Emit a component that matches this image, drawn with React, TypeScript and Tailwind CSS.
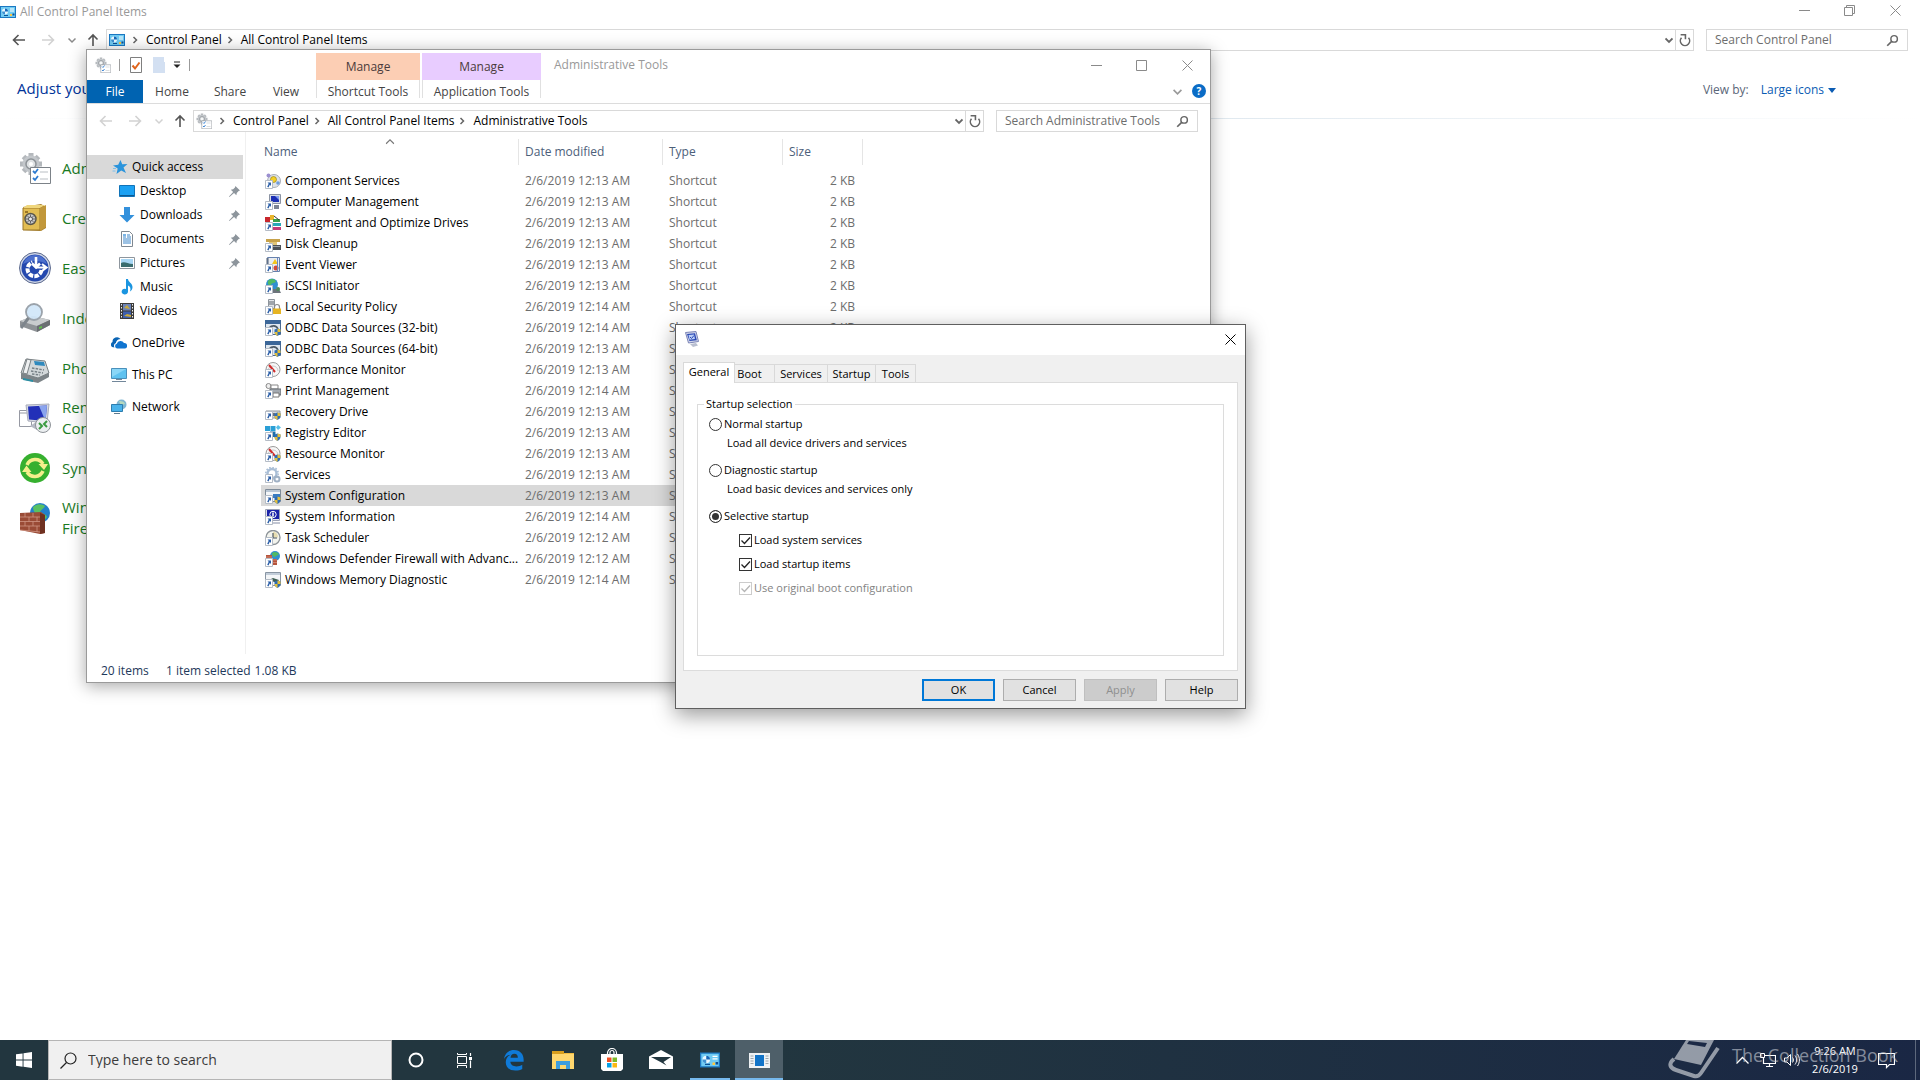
import { useState, type ReactNode } from "react";

interface AdminTool {
  name: string;
  date: string;
  icon: string;
}

const tools: AdminTool[] = [
  { name: "Component Services", date: "2/6/2019 12:13 AM", icon: "component" },
  { name: "Computer Management", date: "2/6/2019 12:13 AM", icon: "computer" },
  { name: "Defragment and Optimize Drives", date: "2/6/2019 12:13 AM", icon: "defrag" },
  { name: "Disk Cleanup", date: "2/6/2019 12:13 AM", icon: "cleanup" },
  { name: "Event Viewer", date: "2/6/2019 12:13 AM", icon: "event" },
  { name: "iSCSI Initiator", date: "2/6/2019 12:13 AM", icon: "iscsi" },
  { name: "Local Security Policy", date: "2/6/2019 12:14 AM", icon: "policy" },
  { name: "ODBC Data Sources (32-bit)", date: "2/6/2019 12:14 AM", icon: "odbc" },
  { name: "ODBC Data Sources (64-bit)", date: "2/6/2019 12:13 AM", icon: "odbc" },
  { name: "Performance Monitor", date: "2/6/2019 12:13 AM", icon: "perf" },
  { name: "Print Management", date: "2/6/2019 12:14 AM", icon: "print" },
  { name: "Recovery Drive", date: "2/6/2019 12:13 AM", icon: "recovery" },
  { name: "Registry Editor", date: "2/6/2019 12:13 AM", icon: "registry" },
  { name: "Resource Monitor", date: "2/6/2019 12:13 AM", icon: "resource" },
  { name: "Services", date: "2/6/2019 12:13 AM", icon: "services" },
  { name: "System Configuration", date: "2/6/2019 12:13 AM", icon: "config" },
  { name: "System Information", date: "2/6/2019 12:14 AM", icon: "info" },
  { name: "Task Scheduler", date: "2/6/2019 12:12 AM", icon: "task" },
  { name: "Windows Defender Firewall with Advanc...", date: "2/6/2019 12:12 AM", icon: "firewall" },
  { name: "Windows Memory Diagnostic", date: "2/6/2019 12:14 AM", icon: "memory" },
];

const quickLinks = [
  { name: "Desktop", pinned: true },
  { name: "Downloads", pinned: true },
  { name: "Documents", pinned: true },
  { name: "Pictures", pinned: true },
  { name: "Music", pinned: false },
  { name: "Videos", pinned: false },
];

const panelItems = [
  "Administrative Tools",
  "Credential Manager",
  "Ease of Access Center",
  "Indexing Options",
  "Phone and Modem",
  "RemoteApp and Desktop Connections",
  "Sync Center",
  "Windows Defender Firewall",
];

const dialogTabs = [
  { name: "General", width: "w-[52px]" },
  { name: "Boot", width: "w-[40px]" },
  { name: "Services", width: "w-[53px]" },
  { name: "Startup", width: "w-[48px]" },
  { name: "Tools", width: "w-[40px]" },
];

function Svg({ size = 16, box = 16, children }: { size?: number; box?: number; children: ReactNode }) {
  return (
    <svg width={size} height={size} viewBox={`0 0 ${box} ${box}`} fill="none" className="shrink-0" aria-hidden="true">
      {children}
    </svg>
  );
}

/* ---------- small line glyphs ---------- */

function ArrowGlyph({ dir, color }: { dir: "left" | "right" | "up"; color: string }) {
  const paths = {
    left: "M14 8H2.5M7.5 3l-5 5 5 5",
    right: "M2 8h11.500M8.500 3l5 5-5 5",
    up: "M8 14V3M3.500 7.500L8 3l4.500 4.500",
  };
  return (
    <Svg>
      <path d={paths[dir]} stroke={color} strokeWidth="1.6" />
    </Svg>
  );
}

function Chevron({ dir = "down", color = "#666", size = 8, thick = 1.5 }: { dir?: "down" | "right" | "up"; color?: string; size?: number; thick?: number }) {
  const paths = { down: "M.5 2.500L4 6l3.500-3.500", right: "M2.500 1L5.500 4l-3 3", up: "M.5 6L4 2.500 7.500 6" };
  return (
    <Svg size={size} box={8}>
      <path d={paths[dir]} stroke={color} strokeWidth={thick} />
    </Svg>
  );
}

function Refresh() {
  return (
    <Svg size={14}>
      <path d="M4 5.500A5.300 5.300 0 1 0 12 5.500" stroke="#666" strokeWidth="1.800" />
      <path d="M3 2h5.500v5" stroke="#666" strokeWidth="1.800" />
    </Svg>
  );
}

function Magnifier() {
  return (
    <Svg size={13}>
      <circle cx="10" cy="6" r="4" stroke="#666" strokeWidth="1.800" />
      <path d="M7 9l-5.500 5.500" stroke="#666" strokeWidth="2" />
    </Svg>
  );
}

function CaptionGlyph({ kind, color }: { kind: "min" | "max" | "restore" | "close"; color: string }) {
  return (
    <Svg size={11} box={11}>
      {kind === "min" && <path d="M0 5.500h11" stroke={color} />}
      {kind === "max" && <path d="M.5.5h10v10H.5z" stroke={color} />}
      {kind === "restore" && <path d="M.5 2.500h8v8h-8zM2.500 2.500v-2h8v8h-2" stroke={color} />}
      {kind === "close" && <path d="M.5.5l10 10M10.500.5l-10 10" stroke={color} />}
    </Svg>
  );
}

/* ---------- 16px icons ---------- */

function ControlPanelIcon({ size = 16 }: { size?: number }) {
  return (
    <Svg size={size}>
      <path d="M0 2h16v12H0z" fill="#1b78c2" />
      <path d="M1 3h14v10H1z" fill="#6fcbf3" />
      <circle cx="5" cy="7.500" r="3" fill="#e9f7ff" />
      <path d="M5 7.500v-3a3 3 0 0 1 3 3z" fill="#1467b8" />
      <path d="M5 7.500H2a3 3 0 0 0 3 3z" fill="#3f92d2" />
      <path d="M10 5h4M10 7h4" stroke="#fff" />
      <path d="M10 10h2v2h-2z" fill="#ffc83d" />
      <path d="M12.500 9.500h2v2h-2zM4 11h4v1H4z" fill="#0d4f93" />
    </Svg>
  );
}

function AdminToolsIcon({ size = 16 }: { size?: number }) {
  return (
    <Svg size={size} box={32}>
      <g stroke="#b4b8bc" strokeWidth="5">
        <path d="M12 1v22M1 12h22M4.500 4.500l15 15M19.500 4.500l-15 15" />
      </g>
      <circle cx="12" cy="12" r="8.500" fill="#c3c7cb" />
      <circle cx="12" cy="12" r="5" fill="#dfe2e4" stroke="#8d9297" strokeWidth="1.500" />
      <circle cx="12" cy="12" r="2" fill="#fff" />
      <path d="M11.500 15.500h20v16h-20z" fill="#fff" stroke="#7c8288" />
      <path d="M14 19l2 2 3-4M14 26l2 2 3-4" stroke="#2e7cd1" strokeWidth="1.800" />
      <path d="M21 20h8M21 27h8" stroke="#b9bec3" />
    </Svg>
  );
}

function Shield() {
  return (
    <>
      <path d="M12.500 8.500l3 1v2.500c0 2-1.500 3-3 4-1.500-1-3-2-3-4V9.500z" fill="#2f6db5" />
      <path d="M12.500 8.500l3 1V12h-3zM9.500 12h3v4c-1.500-1-3-2-3-4z" fill="#e3bf3a" />
    </>
  );
}

function toolArt(kind: string): ReactNode {
  switch (kind) {
    case "component":
      return (
        <>
          <circle cx="9" cy="8" r="6.500" fill="#dfe3e8" stroke="#a9afb8" />
          <circle cx="3.500" cy="2.500" r="2" fill="#9b8fd0" />
          <circle cx="8.500" cy="6.500" r="3" fill="#f4cf27" stroke="#8a7a12" strokeWidth=".6" />
          <circle cx="13" cy="10" r="1.800" fill="#6f9cdc" />
        </>
      );
    case "computer":
      return (
        <>
          <path d="M4.500.5h11v9h-11z" fill="#d9dde6" stroke="#8b93a3" />
          <path d="M6 2h8v6H6z" fill="#1c2fb4" />
          <path d="M10 2h4v4z" fill="#7f9cf0" />
          <path d="M9 11h5v4H9z" fill="#7c8494" />
        </>
      );
    case "defrag":
      return (
        <>
          <path d="M0 2h5v5H0z" fill="#c8262c" />
          <path d="M5 0h4v5H5z" fill="#e8b52b" />
          <path d="M8 4h7v3H8z" fill="#3ba24b" />
          <path d="M9 1l5 4" stroke="#333" />
          <path d="M8 8h8v3H8z" fill="#27a8b8" />
          <path d="M8 12h8v3H8z" fill="#c23a78" />
        </>
      );
    case "cleanup":
      return (
        <>
          <path d="M1 3h14v3H1z" fill="#c7a24a" />
          <path d="M4 6h8v3H4z" fill="#e2c678" />
          <path d="M7 9h9v5H7z" fill="#4b5157" />
          <path d="M8 10h7v1H8z" fill="#9ba1a7" />
        </>
      );
    case "event":
      return (
        <>
          <path d="M2.500.5h12v14h-12z" fill="#e8edf5" stroke="#6681ad" />
          <path d="M1 2h3M1 4h3M1 6h3" stroke="#56606e" />
          <path d="M10 2l3 5H7z" fill="#f3c51d" />
          <circle cx="11" cy="11" r="2.500" fill="#d24a3a" />
          <path d="M12.500 1v13" stroke="#6d87bd" />
        </>
      );
    case "iscsi":
      return (
        <>
          <circle cx="7" cy="6.500" r="6" fill="#2f8ed0" />
          <path d="M3 3c3-3 6-2 8 0-1 3-4 1-5 4-2 1-4-1-3-4z" fill="#4fb963" />
          <path d="M8 11h6l2 4H8z" fill="#6d747c" />
          <circle cx="13" cy="11" r="2" fill="#4c8b58" />
        </>
      );
    case "policy":
      return (
        <>
          <path d="M3.500.5h6v9h-6z" fill="#e3e6ea" stroke="#8d949c" />
          <path d="M4 3h5M4 5h5" stroke="#5d646c" />
          <path d="M9.500 10V8a2.500 2.500 0 0 1 5 0v2" stroke="#8a8a8a" strokeWidth="1.200" />
          <path d="M8 9.500h8V15H8z" fill="#e6b422" />
        </>
      );
    case "odbc":
      return (
        <>
          <path d="M.5.5h15v14H.5z" fill="#dfe8f1" stroke="#4c6a8f" />
          <path d="M0 0h16v4H0z" fill="#3c6799" />
          <path d="M4 8c3-3 7-3 9 1" stroke="#4d5a66" strokeWidth="1.600" />
          <Shield />
        </>
      );
    case "perf":
    case "resource":
      return (
        <>
          <circle cx="8" cy="7.500" r="7" fill="#f7f7f7" stroke="#9a9a9a" />
          <path d="M3 9a5 5 0 0 1 10 0" stroke="#c9c9c9" />
          <path d="M4 3l6 7" stroke="#cf2b2b" strokeWidth="2" />
          {kind === "resource" && <Shield />}
        </>
      );
    case "print":
      return (
        <>
          <circle cx="3.500" cy="3" r="2.500" fill="#eee" stroke="#888" />
          <path d="M6 2h7v4H6z" fill="#fff" stroke="#888" />
          <path d="M5 6h11v6H5z" fill="#a4aab1" stroke="#666c73" />
          <path d="M8 10h6v4H8z" fill="#fff" stroke="#777" />
        </>
      );
    case "recovery":
      return (
        <>
          <path d="M1 7h14v7H1z" fill="#d5d9dd" stroke="#8f959b" />
          <path d="M6 9h4v3H6z" fill="#6d7379" />
          <Shield />
        </>
      );
    case "registry":
      return (
        <>
          <path d="M0 1h5v5H0zM5.500 1h5v5h-5z" fill="#2a9fd6" />
          <path d="M5 6.500h5.500V12H5z" fill="#1b6fa8" />
          <path d="M13 0l3 2.500-3 2.500-2-2.500z" fill="#55bfe8" />
          <Shield />
        </>
      );
    case "services":
      return (
        <>
          <circle cx="7" cy="6.500" r="4.500" stroke="#a9bed6" strokeWidth="2.400" />
          <circle cx="7" cy="6.500" r="6.200" stroke="#a9bed6" strokeWidth="1.600" strokeDasharray="1.600 1.600" />
          <circle cx="12" cy="12" r="2.500" stroke="#9fb0c4" strokeWidth="2" />
        </>
      );
    case "config":
      return (
        <>
          <path d="M.5 1.500h15v12H.5z" fill="#f4f6f8" stroke="#7e8b99" />
          <path d="M1 2h14v2H1z" fill="#b9c6d4" />
          <path d="M8 6h7v4H8z" fill="#3a7cc2" />
          <Shield />
        </>
      );
    case "info":
      return (
        <>
          <path d="M.5.5h14v11H.5z" fill="#dfe1ea" stroke="#9aa0b4" />
          <path d="M2 1h12v9H2z" fill="#1a22a8" />
          <circle cx="8" cy="5.500" r="3.200" stroke="#fff" />
          <path d="M8 3.500v4" stroke="#fff" strokeWidth="1.500" />
          <path d="M8 13h7v2H8z" fill="#c2c6d2" />
        </>
      );
    case "task":
      return (
        <>
          <circle cx="8" cy="7.500" r="7" fill="#f3f4ee" stroke="#8e9499" strokeWidth="1.400" />
          <path d="M8 7.500V1.500a6 6 0 0 1 5 6z" fill="#e6ddb0" />
          <path d="M8 3v5h4" stroke="#4b5560" strokeWidth="1.200" />
        </>
      );
    case "firewall":
      return (
        <>
          <circle cx="10" cy="5" r="5" fill="#2f8ed0" />
          <path d="M7 2c3-2 5-1 7 1-1 2-3 1-4 3-2 0-3-2-3-4z" fill="#4fb963" />
          <path d="M1 4h6v4h5v6H1z" fill="#b5543c" />
          <path d="M1 6h6M7 9h5M7 11.500h5" stroke="#e0a392" strokeWidth=".6" />
        </>
      );
    default:
      return (
        <>
          <path d="M.5.5h15v13H.5z" fill="#f4f6f8" stroke="#8995a3" />
          <path d="M1 1h14v2H1z" fill="#c2cdd9" />
          <path d="M4 8l4-2 6 2-2 3z" fill="#3f5f52" />
          <Shield />
        </>
      );
  }
}

function ToolIcon({ kind }: { kind: string }) {
  return (
    <Svg>
      {toolArt(kind)}
      {/* shortcut arrow badge */}
      <path d="M.5 7.500h7v8h-7z" fill="#fff" stroke="#b5bcc6" />
      <path d="M2.500 9.500H6V13l-1.200-1.200-1.300 2.700-1.300-.8 1.500-2.900z" fill="#2a5ea8" />
    </Svg>
  );
}

function NavIcon({ name }: { name: string }) {
  switch (name) {
    case "Quick access":
      return (
        <Svg>
          <path d="M8.500 1l1.700 4.300 5.300-.3-4 3.600 2.500 5.400-4.800-2.500-4.700 3.500 1.200-5.500L1 6.500l5.200-.8z" fill="#2a94dc" />
          <path d="M1 9.500h3M.5 12h3" stroke="#7dc0ec" />
        </Svg>
      );
    case "Desktop":
      return (
        <Svg>
          <path d="M.5 2.500h15v11H.5z" fill="#1ba1f3" stroke="#1173b8" />
          <path d="M1 12h14v1H1z" fill="#0c5a93" />
        </Svg>
      );
    case "Downloads":
      return (
        <Svg>
          <path d="M5 0h6v8h4.500L8 15.500.5 8H5z" fill="#3391dc" />
        </Svg>
      );
    case "Documents":
      return (
        <Svg>
          <path d="M2.500.5h8l3 3v12h-11z" fill="#fff" stroke="#7f8891" />
          <path d="M4 6h3M4 8h8M4 10h8M4 12h8M8 4h3M8 6h4" stroke="#3a85c9" />
          <path d="M4 3h3v2H4z" fill="#7ab5e6" />
        </Svg>
      );
    case "Pictures":
      return (
        <Svg>
          <path d="M.5 2.500h15v11H.5z" fill="#fff" stroke="#8e969e" />
          <path d="M2 4h12v8H2z" fill="#a7d6f4" />
          <path d="M2 8c4-2 6 1 12 1v3H2z" fill="#3a6d6f" />
        </Svg>
      );
    case "Music":
      return (
        <Svg>
          <path d="M7 0h2c0 3 4.500 4 4.500 8 0 2-1 3.500-2.500 4.500 1-3 .5-5-2-6V12.500A3.200 2.800 0 1 1 7 10z" fill="#1b95e0" />
        </Svg>
      );
    case "Videos":
      return (
        <Svg>
          <path d="M1 0h14v16H1z" fill="#3b3b3b" />
          <path d="M4 1h8v6.500H4z" fill="#6c84b8" />
          <path d="M4 8.500h8V15H4z" fill="#3d5fae" />
          <path d="M5 5l3-3 3 4zM5 13l3-2 4 1v2z" fill="#c9a93a" />
          <path d="M2.500 1v14M13.500 1v14" stroke="#eee" strokeDasharray="1.500 1.500" />
        </Svg>
      );
    case "OneDrive":
      return (
        <Svg>
          <path d="M1 12a3 3 0 0 1 .5-5A4.500 4.500 0 0 1 9.500 4C6 4 5 7 5 8c-2 .5-2.500 3-1.500 4.500z" fill="#0a64b4" />
          <path d="M6 13.500a2.500 2.500 0 0 1-.2-4.800A4 4 0 0 1 13 8a2.800 2.800 0 0 1 1 5.500z" fill="#1175d0" />
        </Svg>
      );
    case "This PC":
      return (
        <Svg>
          <path d="M.5 1.500h15v10H.5z" fill="#5fc2f0" stroke="#4a90bb" />
          <path d="M1 2h14L1 10z" fill="#8ad6f7" />
          <path d="M5 12.500h6M1 14.500h14" stroke="#72879a" />
        </Svg>
      );
    default:
      return (
        <Svg>
          <circle cx="10.500" cy="5.500" r="5" fill="#7fb6d3" />
          <path d="M8 2c2 0 5 0 6 3-2 1-3 0-4 2z" fill="#b5d8bd" />
          <path d="M.5 5.500h11v7H.5z" fill="#49b2ea" stroke="#2d7dae" />
          <path d="M3 14.500h6" stroke="#5d7b90" />
        </Svg>
      );
  }
}

function Pin() {
  return (
    <Svg size={11} box={12}>
      <path d="M7 0l5 5-1.500.5L8.500 7.500 8 10 5.500 7.500.5 12 0 11.500l4.500-5L2 4l2.500-.5 2-2z" fill="#8d959c" />
    </Svg>
  );
}

/* ---------- 32px control panel icons ---------- */

function PanelIcon({ name }: { name: string }) {
  switch (name) {
    case "Administrative Tools":
      return <AdminToolsIcon size={32} />;
    case "Credential Manager":
      return (
        <Svg size={32} box={32}>
          <path d="M4 5l18-3 5 3v21l-5 3-18-1z" fill="#a9822f" />
          <path d="M4 6h17v22H4z" fill="#e2bd52" stroke="#9b7626" />
          <path d="M4 6l4-3h18l-5 3z" fill="#efd67c" />
          <path d="M21 6l6-3v22l-6 4z" fill="#c1973a" />
          <circle cx="11.500" cy="17" r="5.500" fill="#c9cacb" stroke="#5b574a" strokeWidth="1.500" />
          <path d="M11.500 12.500v9M7 17h9M8.500 14l6 6M14.500 14l-6 6" stroke="#66676b" />
          <circle cx="11.500" cy="17" r="2" fill="#efefef" stroke="#55565a" />
          <path d="M6 9h3v2H6z" fill="#9b7626" />
        </Svg>
      );
    case "Ease of Access Center":
      return (
        <Svg size={32} box={32}>
          <circle cx="16" cy="16" r="15.500" fill="#cfd6e6" stroke="#5d6a8e" />
          <circle cx="16" cy="16" r="13.500" fill="#2448ae" />
          <path d="M4 12a12.500 12.500 0 0 1 24 0c-7-4-17-4-24 0z" fill="#4d70cd" />
          <path d="M22.500 18a7 7 0 1 1-9-7.500" stroke="#fff" strokeWidth="4" strokeDasharray="4.500 1.200" />
          <path d="M17 5v10M13 11.500l4 4 4-4" stroke="#fff" strokeWidth="2.600" />
          <path d="M17 15.500h9M23 12l4.500 3.500L23 19" stroke="#fff" strokeWidth="2.200" />
        </Svg>
      );
    case "Indexing Options":
      return (
        <Svg size={32} box={32}>
          <path d="M1 19l13-5 17 4v5l-13 7L1 24z" fill="#8e9296" />
          <path d="M1 19l13-5 17 4-13 6z" fill="#c9ccce" />
          <path d="M18 24l13-6v5l-13 7z" fill="#6b6f73" />
          <path d="M20 25l3-1v2l-3 1z" fill="#61c14a" />
          <circle cx="15" cy="10" r="8" fill="#cfe6f8" fillOpacity=".9" stroke="#9ba3ab" strokeWidth="1.800" />
          <path d="M9.500 16L2 26" stroke="#7e858c" strokeWidth="3" />
        </Svg>
      );
    case "Phone and Modem":
      return (
        <Svg size={32} box={32}>
          <path d="M2 21l16 4 12-5v5l-11 6L2 27z" fill="#7d8488" />
          <path d="M7 7l19 2 4 12-11 5-17-5z" fill="#d3d8da" stroke="#7b8285" />
          <path d="M15 9l10 1 1 4-10-1z" fill="#2f89bd" />
          <path d="M13 16l12 2M12 19l12 2M13 22l8 1" stroke="#788187" strokeWidth="1.500" strokeDasharray="2.500 1.200" />
          <path d="M4 21L8 7l4 1-4 14z" fill="#eef0f1" stroke="#7b8285" />
          <path d="M4 26l10 2v2L4 28z" fill="#2b8ea3" />
        </Svg>
      );
    case "RemoteApp and Desktop Connections":
      return (
        <Svg size={32} box={32}>
          <path d="M.5 8.500h12v16H.5z" fill="#fff" stroke="#9699a3" />
          <path d="M1 11h11" stroke="#9699a3" />
          <path d="M7 3l23-1-2 19-19-2z" fill="#d5d8e2" stroke="#a9adba" />
          <path d="M9 4.500l19-1-1.500 15.500L10 17.500z" fill="#2230b8" />
          <path d="M20 4l8-.5L26.500 19z" fill="#8aa4ee" />
          <path d="M11 24l6-4 5 5-4 3z" fill="#b5b9c4" />
          <circle cx="24" cy="23" r="7.500" fill="#eceff1" stroke="#8d9297" />
          <path d="M20 21l3 3-3 3M28 19l-3 3 3 3" stroke="#3b9b42" strokeWidth="2" />
        </Svg>
      );
    case "Sync Center":
      return (
        <Svg size={32} box={32}>
          <circle cx="16" cy="16" r="15" fill="#36b02f" />
          <path d="M8 13a9 9 0 0 1 16-1" stroke="#f4ef8c" strokeWidth="3.500" />
          <path d="M24 19a9 9 0 0 1-16 1" stroke="#f4ef8c" strokeWidth="3.500" />
          <path d="M19.500 12h9.500l-4 6zM3 20h9.500L7.500 13.500z" fill="#f4ef8c" />
        </Svg>
      );
    default:
      return (
        <Svg size={32} box={32}>
          <circle cx="21" cy="11" r="10" fill="#2380cb" />
          <path d="M14 5c4-4 9-3 12-1-1 3-4 3-5 6 3 2 6 2 7 5-3 5-8 4-9 1 0-4-5-5-5-11z" fill="#58c163" />
          <path d="M1 11l21-1 4 3v18l-5 1-20-4z" fill="#9a4b36" />
          <path d="M1 15h20M1 19.500h20M1 24h20M1 28l20 2" stroke="#cf9483" strokeWidth=".8" />
          <path d="M6 11v4M14 11v4M10 15v4.500M18 15v4.500M6 19.500V24M14 19.500V24M10 24v5M18 24v6" stroke="#cf9483" strokeWidth=".8" />
          <path d="M21 11l5 2v18l-5 1z" fill="#6f3121" />
        </Svg>
      );
  }
}

/* ---------- shared window parts ---------- */

function CaptionButtons({ middle }: { middle: "max" | "restore" }) {
  return (
    <div className="ml-auto flex h-full">
      <button type="button" aria-label="Minimize" className="flex w-[46px] items-center justify-center">
        <CaptionGlyph kind="min" color="#8a8a8a" />
      </button>
      <button type="button" aria-label="Maximize" className="flex w-[45px] items-center justify-center">
        <CaptionGlyph kind={middle} color="#8a8a8a" />
      </button>
      <button type="button" aria-label="Close" className="flex w-[46px] items-center justify-center">
        <CaptionGlyph kind="close" color="#8a8a8a" />
      </button>
    </div>
  );
}

interface AddressRowProps {
  icon: ReactNode;
  crumbs: string[];
  searchLabel: string;
  backColor: string;
  searchWidth: string;
}

function AddressRow({ icon, crumbs, searchLabel, backColor, searchWidth }: AddressRowProps) {
  return (
    <div className="flex h-[22px] items-center pr-3">
      <button type="button" aria-label="Back" className="ml-[11px]">
        <ArrowGlyph dir="left" color={backColor} />
      </button>
      <button type="button" aria-label="Forward" className="ml-[13px]">
        <ArrowGlyph dir="right" color="#d2d2d2" />
      </button>
      <button type="button" aria-label="Recent locations" className="ml-3">
        <Chevron color={backColor === "#555" ? "#8a8a8a" : "#d2d2d2"} />
      </button>
      <button type="button" aria-label="Up" className="ml-[9px]">
        <ArrowGlyph dir="up" color="#555" />
      </button>
      <div className="ml-[5px] flex h-full flex-1 items-center border border-[#d9d9d9] bg-white pl-0.5">
        <span className="mr-0.5">{icon}</span>
        {crumbs.map((crumb) => (
          <div key={crumb} className="flex items-center">
            <span className="w-[19px] pl-1">
              <Chevron dir="right" />
            </span>
            <a href="#" className="text-black">{crumb}</a>
          </div>
        ))}
        <button type="button" aria-label="Previous locations" className="ml-auto mr-0.5">
          <Chevron thick={1.8} />
        </button>
        <button type="button" aria-label="Refresh" className="flex h-full w-[18px] items-center justify-center border-l border-[#d9d9d9]">
          <Refresh />
        </button>
      </div>
      <div className={`ml-3 flex h-full items-center border border-[#d9d9d9] bg-white pl-2 pr-2 ${searchWidth}`}>
        <input
          type="text"
          aria-label={searchLabel}
          placeholder={searchLabel}
          className="min-w-0 flex-1 bg-transparent outline-none placeholder:text-[#6d6d6d]"
        />
        <Magnifier />
      </div>
    </div>
  );
}

function ControlPanelWindow() {
  return (
    <section className="flex flex-1 flex-col bg-white" aria-label="All Control Panel Items">
      <div className="flex h-5 pr-0.5">
        <div className="flex h-6 items-center">
          <ControlPanelIcon />
          <span className="ml-1 text-[#999]">All Control Panel Items</span>
        </div>
        <CaptionButtons middle="restore" />
      </div>
      <div className="mt-[9px]">
        <AddressRow
          icon={<ControlPanelIcon />}
          crumbs={["Control Panel", "All Control Panel Items"]}
          searchLabel="Search Control Panel"
          backColor="#555"
          searchWidth="w-[202px]"
        />
      </div>
      <div className="mt-[21px] flex h-8 items-center pl-[17px] pr-[84px]">
        <h1 className="text-[15px] text-[#003399]">Adjust your computer's settings</h1>
        <div className="ml-auto flex items-center pt-1">
          <label htmlFor="view-by" className="text-[#5a6678]">View by:</label>
          <span className="ml-3 flex items-center gap-1 text-[#0b5cb3]">
            <select id="view-by" className="field-sizing-content appearance-none bg-transparent outline-none">
              <option>Large icons</option>
            </select>
            <svg width="8" height="5" viewBox="0 0 8 5" aria-hidden="true">
              <path d="M0 0h8L4 5z" fill="#0b5cb3" />
            </svg>
          </span>
        </div>
      </div>
      <div className="mt-[14px] h-px bg-gradient-to-r from-white via-[#d5e1ea] to-white" />
      <ul className="mt-6 flex w-[240px] flex-col pl-[19px]">
        {panelItems.map((item) => (
          <li key={item} className="flex h-[50px] items-center gap-[11px]">
            <PanelIcon name={item} />
            <a href="#" className="text-[15px] leading-[21px] text-[#1a7a1f]">{item}</a>
          </li>
        ))}
      </ul>
    </section>
  );
}

function ContextTab({ label, group, tint, width }: { label: string; group: string; tint: string; width: string }) {
  return (
    <div className={`flex flex-col ${width}`}>
      <span className={`mt-[3px] flex h-[27px] items-center justify-center text-[#4a3b3b] ${tint}`}>{label}</span>
      <button type="button" className="h-[18px] border-x border-[#e0e0e0] pt-1 text-[#444]">{group}</button>
    </div>
  );
}

function Ribbon() {
  return (
    <div className="flex h-[54px] border-b border-[#dcdcdc]">
      <div className="flex w-[229px] flex-col">
        <div className="flex h-[30px] items-center pl-2">
          <AdminToolsIcon />
          <span className="ml-2 h-3 w-px bg-[#9a9a9a]" />
          <button type="button" aria-label="Properties" className="ml-2">
            <Svg>
              <path d="M2.500.5h11v15h-11z" fill="#fff" stroke="#7f7f7f" />
              <path d="M4.500 8.500l2.500 3 4.500-6" stroke="#e0641c" strokeWidth="2" />
            </Svg>
          </button>
          <button type="button" aria-label="New folder" className="ml-2">
            <Svg>
              <path d="M1 0h11v5h1v11H1z" fill="#d3e0f2" />
            </Svg>
          </button>
          <button type="button" aria-label="Customize toolbar" className="ml-[5px]">
            <Svg size={8} box={8}>
              <path d="M1 1h6" stroke="#222" />
              <path d="M.5 3.500h7L4 7z" fill="#222" />
            </Svg>
          </button>
          <span className="ml-2 h-3 w-px bg-[#9a9a9a]" />
        </div>
        <div className="flex h-[23px] text-[#444]">
          <button type="button" className="w-14 bg-[#0063b1] text-white">File</button>
          <button type="button" className="w-[58px]">Home</button>
          <button type="button" className="w-[58px]">Share</button>
          <button type="button" className="w-[54px]">View</button>
        </div>
      </div>
      <div className="flex gap-0.5">
        <ContextTab label="Manage" group="Shortcut Tools" tint="bg-[#fcceb4]" width="w-[104px]" />
        <ContextTab label="Manage" group="Application Tools" tint="bg-[#e8ccff]" width="w-[119px]" />
      </div>
      <div className="flex flex-1 flex-col">
        <div className="flex h-[30px] items-center pl-[13px]">
          <span className="text-[#999]">Administrative Tools</span>
          <CaptionButtons middle="max" />
        </div>
        <div className="flex h-[22px] items-center justify-end gap-2.5 pr-1">
          <button type="button" aria-label="Collapse ribbon">
            <Chevron color="#9a9a9a" size={9} />
          </button>
          <button type="button" aria-label="Help" className="flex size-3.5 items-center justify-center rounded-full bg-[#0a6cc6] text-[10px] font-bold text-white">
            ?
          </button>
        </div>
      </div>
    </div>
  );
}

function Sidebar() {
  return (
    <nav className="flex w-[159px] shrink-0 flex-col border-r border-[#f0f0f0] pr-0.5 pt-[23px]">
      <a href="#" className="flex h-6 items-center gap-1 bg-[#d9d9d9] pl-[25px]">
        <NavIcon name="Quick access" />
        Quick access
      </a>
      {quickLinks.map((link) => (
        <a key={link.name} href="#" className="flex h-6 items-center gap-[5px] pl-8 pr-[3px]">
          <NavIcon name={link.name} />
          <span className="flex-1">{link.name}</span>
          {link.pinned && <Pin />}
        </a>
      ))}
      {["OneDrive", "This PC", "Network"].map((name) => (
        <a key={name} href="#" className="mt-2 flex h-6 items-center gap-[5px] pl-6">
          <NavIcon name={name} />
          {name}
        </a>
      ))}
    </nav>
  );
}

function HeaderCell({ label, width, sorted = false }: { label: string; width: string; sorted?: boolean }) {
  return (
    <th className={`h-[38px] p-0 pt-[7px] text-left align-top font-normal text-[#4c607a] ${width}`}>
      <div className={`relative flex h-[26px] items-center border-r border-[#e5e5e5] ${sorted ? "pl-[3px]" : "pl-1.5"}`}>
        {label}
        {sorted && (
          <span className="absolute left-1/2 top-[-2px] -translate-x-1/2">
            <Chevron dir="up" color="#777" size={9} thick={1} />
          </span>
        )}
      </div>
    </th>
  );
}

function FileTable({ selected, onSelect }: { selected: string; onSelect: (name: string) => void }) {
  return (
    <table className="ml-[15px] w-[602px] table-fixed border-collapse self-start">
      <thead>
        <tr>
          <HeaderCell label="Name" width="w-[258px]" sorted />
          <HeaderCell label="Date modified" width="w-[144px]" />
          <HeaderCell label="Type" width="w-[120px]" />
          <HeaderCell label="Size" width="w-[80px]" />
        </tr>
      </thead>
      <tbody>
        {tools.map((tool) => (
          <tr
            key={tool.name}
            onClick={() => onSelect(tool.name)}
            className={`h-[21px] text-[#6d6d6d] ${tool.name === selected ? "bg-[#d9d9d9]" : ""}`}
          >
            <td className="p-0">
              <div className="flex items-center gap-1 whitespace-nowrap pl-1 text-black">
                <ToolIcon kind={tool.icon} />
                {tool.name}
              </div>
            </td>
            <td className="p-0 pl-1.5">{tool.date}</td>
            <td className="p-0 pl-1.5">Shortcut</td>
            <td className="p-0 pr-2 text-right">2 KB</td>
          </tr>
        ))}
      </tbody>
    </table>
  );
}

function ExplorerWindow() {
  const [selected, setSelected] = useState("System Configuration");

  return (
    <section
      aria-label="Administrative Tools"
      className="absolute left-[86px] top-[49px] w-[1125px] border border-[#9a9a9a] bg-white shadow-[0_3px_16px_rgba(0,0,0,0.35)]"
    >
      <Ribbon />
      <div className="pt-1.5">
        <AddressRow
          icon={<AdminToolsIcon />}
          crumbs={["Control Panel", "All Control Panel Items", "Administrative Tools"]}
          searchLabel="Search Administrative Tools"
          backColor="#d2d2d2"
          searchWidth="w-[202px]"
        />
      </div>
      <div className="flex pb-[5px]">
        <Sidebar />
        <div className="flex pb-16">
          <FileTable selected={selected} onSelect={setSelected} />
        </div>
      </div>
      <footer className="flex h-[23px] items-center pl-3.5 text-[#1e395b]">
        <span className="w-[65px]">20 items</span>
        <span className="mr-1">1 item selected</span>
        <span>1.08 KB</span>
      </footer>
    </section>
  );
}

/* ---------- msconfig dialog ---------- */

function Radio({ label, checked, onPick }: { label: string; checked: boolean; onPick: () => void }) {
  return (
    <label className="flex h-4 items-center gap-0.5">
      <input
        type="radio"
        name="startup"
        checked={checked}
        onChange={onPick}
        className="size-[13px] appearance-none rounded-full border border-[#333] bg-white checked:bg-[#333] checked:shadow-[inset_0_0_0_2px_#fff]"
      />
      {label}
    </label>
  );
}

function Check({ label, disabled = false }: { label: string; disabled?: boolean }) {
  return (
    <label className={`flex h-4 items-center gap-0.5 ${disabled ? "text-[#838383]" : ""}`}>
      <span className="relative flex size-[13px]">
        <input
          type="checkbox"
          defaultChecked
          disabled={disabled}
          className="peer size-[13px] appearance-none border border-[#333] bg-white disabled:border-[#ccc]"
        />
        <svg viewBox="0 0 13 13" className="pointer-events-none absolute inset-0 hidden size-[13px] peer-checked:block" aria-hidden="true">
          <path d="M2.500 6.500l3 3 5.500-6" fill="none" stroke={disabled ? "#b5b5b5" : "#222"} strokeWidth="1.300" />
        </svg>
      </span>
      {label}
    </label>
  );
}

function ConfigDialog() {
  const [tab, setTab] = useState("General");
  const [mode, setMode] = useState("selective");
  const button = "h-[22px] w-[73px] border border-[#adadad] bg-[#e1e1e1]";

  return (
    <section
      role="dialog"
      aria-label="System Configuration"
      className="absolute left-[675px] top-[324px] w-[571px] border border-[#5f5f5f] bg-[#f0f0f0] font-['Open_Sans','Liberation_Sans',sans-serif] text-[11px] leading-4 text-black shadow-[0_6px_20px_rgba(0,0,0,0.4)]"
    >
      <div className="flex h-[30px] items-center bg-white pb-0.5 pl-2 pr-[9px]">
        <Svg>
          <path d="M1.500 1.500L12 .5l2.500 10-10 1.500z" fill="#cfd4ea" stroke="#7b84b5" />
          <path d="M3 3l8-.8 1.800 7L5.500 10z" fill="#2a48b5" />
          <path d="M4.500 4l5.500-.5 1 4.500-5.500.8z" fill="#b9cdf6" />
          <path d="M6 6l1.500 1.500L10 4.500" stroke="#2a48b5" />
          <path d="M6 13l6-1 2 2.500-5 1.500z" fill="#b9bfd0" />
        </Svg>
        <button type="button" aria-label="Close" className="ml-auto">
          <CaptionGlyph kind="close" color="#000" />
        </button>
      </div>
      <div className="p-[7px]">
        <div role="tablist" className="flex h-5 items-end">
          {dialogTabs.map((t) => (
            <button
              key={t.name}
              type="button"
              role="tab"
              aria-selected={t.name === tab}
              onClick={() => setTab(t.name)}
              className={
                t.name === tab
                  ? `relative z-10 -mb-px h-[21px] shrink-0 border border-b-0 border-[#d9d9d9] bg-white pb-0.5 ${t.width}`
                  : `h-[18px] shrink-0 border border-b-0 border-l-0 border-[#d9d9d9] bg-[#f0f0f0] ${t.name === "Boot" ? "pr-2.5" : ""} ${t.width}`
              }
            >
              {t.name}
            </button>
          ))}
        </div>
        <div role="tabpanel" className="border border-[#dcdcdc] bg-white px-[13px] pb-[14px] pt-[13px]">
          <fieldset className="border border-[#dcdcdc] pb-[59px] pl-[11px]">
            <legend className="-ml-[5px] px-0.5">Startup selection</legend>
            <div className="flex flex-col gap-[11px] pt-1">
              <div className="flex flex-col gap-[3px]">
                <Radio label="Normal startup" checked={mode === "normal"} onPick={() => setMode("normal")} />
                <p className="pl-[18px]">Load all device drivers and services</p>
              </div>
              <div className="flex flex-col gap-[3px]">
                <Radio label="Diagnostic startup" checked={mode === "diagnostic"} onPick={() => setMode("diagnostic")} />
                <p className="pl-[18px]">Load basic devices and services only</p>
              </div>
              <div className="flex flex-col gap-2">
                <Radio label="Selective startup" checked={mode === "selective"} onPick={() => setMode("selective")} />
                <div className="flex flex-col gap-2 pl-[30px]">
                  <Check label="Load system services" />
                  <Check label="Load startup items" />
                  <Check label="Use original boot configuration" disabled />
                </div>
              </div>
            </div>
          </fieldset>
        </div>
        <div className="mt-2 flex justify-end gap-2">
          <button type="button" className="h-[22px] w-[73px] border-2 border-[#0078d7] bg-[#e1e1e1]">OK</button>
          <button type="button" className={button}>Cancel</button>
          <button type="button" disabled className="h-[22px] w-[73px] border border-[#bfbfbf] bg-[#cccccc] text-[#8f8f8f]">Apply</button>
          <button type="button" className={button}>Help</button>
        </div>
      </div>
    </section>
  );
}

/* ---------- taskbar ---------- */

function TaskButton({ label, state = "idle", children }: { label: string; state?: "idle" | "open" | "active"; children: ReactNode }) {
  return (
    <button
      type="button"
      aria-label={label}
      className={`relative flex h-10 w-12 items-center justify-center ${state === "active" ? "bg-[#4e5f69]" : ""}`}
    >
      {children}
      {state === "open" && <span className="absolute bottom-0 left-1 right-1 h-0.5 bg-[#76b9ed]" />}
      {state === "active" && <span className="absolute inset-x-0 bottom-0 h-0.5 bg-[#76b9ed]" />}
    </button>
  );
}

function Taskbar() {
  return (
    <footer className="relative flex h-10 items-center overflow-hidden bg-gradient-to-r from-[#22363f] from-40% to-[#1a2744] text-white">
      <button type="button" aria-label="Start" className="flex h-full w-12 items-center justify-center">
        <Svg>
          <path d="M0 2.300L6.600 1.400v6.200H0zM7.500 1.250L16 0v7.600H7.500zM0 8.500h6.600v6.200L0 13.800zM7.500 8.500H16V16l-8.500-1.200z" fill="#fff" />
        </Svg>
      </button>
      <label className="flex h-full w-[344px] items-center border border-[#b5b5b5] bg-[#f0f0f0] pl-[11px]">
        <Svg size={17} box={17}>
          <circle cx="10.500" cy="6.500" r="5.500" stroke="#222" strokeWidth="1.200" />
          <path d="M6.500 10.500L.5 16.500" stroke="#222" strokeWidth="1.200" />
        </Svg>
        <input
          type="text"
          aria-label="Type here to search"
          placeholder="Type here to search"
          className="ml-[11px] flex-1 bg-transparent text-[14px] text-[#333] outline-none placeholder:text-[#3c3c3c]"
        />
      </label>
      <TaskButton label="Cortana">
        <Svg>
          <circle cx="8" cy="8" r="6.500" stroke="#fff" strokeWidth="2" />
        </Svg>
      </TaskButton>
      <TaskButton label="Task View">
        <Svg size={17} box={17}>
          <path d="M1.500 4.500h9v7h-9zM1.500 1v1.500h9V1M1.500 16v-2.500h9V16" stroke="#fff" />
          <path d="M14.500 1v3M14.500 8.500V16" stroke="#fff" strokeWidth="1.200" />
          <path d="M13 5h3v3h-3z" fill="#fff" />
        </Svg>
      </TaskButton>
      <div className="ml-0.5 flex gap-px">
        <TaskButton label="Microsoft Edge">
          <Svg size={22} box={24}>
            <path d="M1 11C2 4.500 6.500 1 12 1c7 0 10.500 5 10.500 10.500V14H8c.3 3.500 3 5 6.500 5 2.700 0 4.700-.6 6.500-1.700v4.500C19 23 16.500 23.500 13.500 23.500 7 23.500 3 20 3 14.500c0-3.700 2-6.700 5.500-8.300C5 6.500 2.500 8.500 1 11zm7.200-1.500h8c0-2.700-1.300-4.200-3.800-4.200-2.400 0-3.900 1.700-4.200 4.200z" fill="#0f7ad8" />
          </Svg>
        </TaskButton>
        <TaskButton label="File Explorer">
          <Svg size={22} box={22}>
            <path d="M0 2h12v5H0z" fill="#d99f1e" />
            <path d="M12 4h10v3H12z" fill="#f0bc42" />
            <path d="M0 5h22v15H0z" fill="#ffd76e" />
            <path d="M4 20v-8h14v8h-4v-4H8v4z" fill="#3e9ede" />
          </Svg>
        </TaskButton>
        <TaskButton label="Microsoft Store">
          <Svg size={24} box={24}>
            <path d="M7.500 7V5a4.500 4.500 0 0 1 9 0v2M10 6V4.500a2 2 0 0 1 4 0V6" stroke="#fff" strokeWidth="1.200" />
            <path d="M1 6h22v15l-2 2H3l-2-2z" fill="#fff" />
            <path d="M7 9.500h4.500V14H7z" fill="#f05023" />
            <path d="M12.500 9.500H17V14h-4.500z" fill="#7db928" />
            <path d="M7 15h4.500v4.500H7z" fill="#04a1e8" />
            <path d="M12.500 15H17v4.500h-4.500z" fill="#fcb813" />
          </Svg>
        </TaskButton>
        <TaskButton label="Mail">
          <Svg size={24} box={24}>
            <path d="M0 8.500L12 2l12 6.500V21H0z" fill="#fff" />
            <path d="M2 9h20l-7.500 5 3 3.500L11.500 14z" fill="#22363f" />
          </Svg>
        </TaskButton>
        <TaskButton label="Control Panel" state="open">
          <ControlPanelIcon size={20} />
        </TaskButton>
        <TaskButton label="System Configuration" state="active">
          <Svg size={21} box={21}>
            <path d="M0 3h21v15H0z" fill="#eef1f3" />
            <path d="M6 5h9v11H6z" fill="#1173c7" />
            <path d="M1.500 6h3M1.500 8.500h3M1.500 11h3M1.500 13.500h3M16.500 6h3M16.500 8.500h3M16.500 11h3M16.500 13.500h3" stroke="#9aa4ab" />
          </Svg>
        </TaskButton>
      </div>
      <div className="ml-auto flex h-full items-center">
        <button type="button" aria-label="Show hidden icons" className="mr-[11px]">
          <svg width="13" height="8" viewBox="0 0 13 8" fill="none" aria-hidden="true">
            <path d="M.5 7.500l6-6 6 6" stroke="#fff" strokeWidth="1.300" />
          </svg>
        </button>
        <button type="button" aria-label="Network" className="mr-2">
          <Svg>
            <path d="M3.500 3.500h12v8h-12zM9.500 11.500v3M6 14.500h7" stroke="#fff" strokeWidth="1.200" />
            <path d="M.5 1.500h4v4h-4z" fill="#1a2744" stroke="#fff" />
          </Svg>
        </button>
        <button type="button" aria-label="Volume" className="mr-3">
          <Svg>
            <path d="M.5 6h2.500l3.500-3.500v11L3 10H.5z" stroke="#fff" />
            <path d="M8.500 5.500c1.200 1.500 1.200 3.500 0 5M11 3.500c2.200 3 2.200 6 0 9M13.500 2c2.500 3.500 2.500 8.500 0 12" stroke="#fff" />
          </Svg>
        </button>
        <div className="mr-5 w-[46px] whitespace-nowrap text-center text-[11px] leading-[18px]">
          <div>9:26 AM</div>
          <div>2/6/2019</div>
        </div>
        <button type="button" aria-label="Notifications" className="mr-5">
          <Svg size={17} box={17}>
            <path d="M.5 1.500h16v11h-5l-3 3v-3h-8z" stroke="#fff" strokeWidth="1.200" />
          </Svg>
        </button>
        <span className="mr-1 h-full w-px bg-[#5d687c]" />
      </div>
      {/* translucent brand mark laid over the tray */}
      <div className="pointer-events-none absolute right-[22px] top-0 flex h-full items-start text-[#c9cdd6] opacity-60">
        <svg width="52" height="40" viewBox="0 0 52 40" fill="none" aria-hidden="true">
          <path d="M18 0h28L33 25 6 19z" fill="#e4e6ea" />
          <path d="M6 19c-6 5-4 9 2 11l18 6c3 1 5 0 7-3L50 8" stroke="#e4e6ea" strokeWidth="4" />
          <path d="M21 1l18 2-2 4-18-3z" fill="#1b2947" />
        </svg>
        <span className="ml-3 mt-[3px] text-[18px] leading-6">The Collection Book</span>
      </div>
    </footer>
  );
}

export default function App() {
  return (
    <main className="relative flex min-h-screen w-full flex-col overflow-hidden bg-white font-['Open_Sans','Liberation_Sans',sans-serif] text-[12px] leading-4 text-black">
      <ControlPanelWindow />
      <ExplorerWindow />
      <ConfigDialog />
      <Taskbar />
    </main>
  );
}
